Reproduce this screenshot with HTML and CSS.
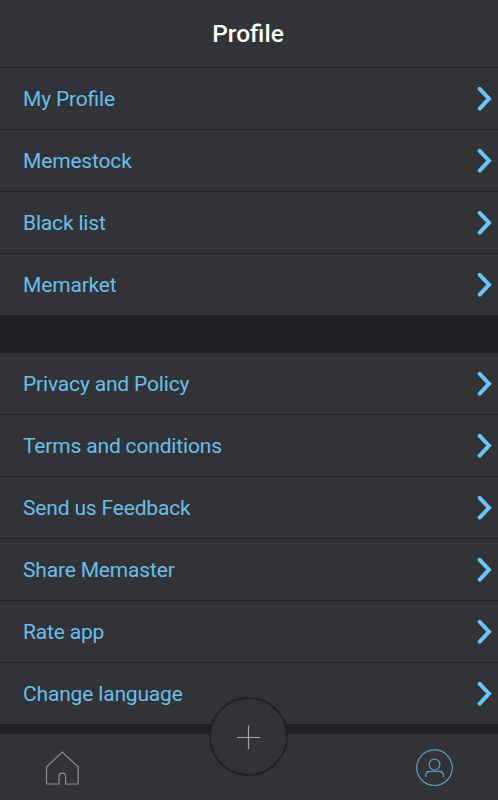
FILE: index.html
```html
<!DOCTYPE html>
<html lang="en">
<head>
<meta charset="utf-8" />
<title>Profile</title>
<link rel="stylesheet" href="styles.css">
</head>
<body>
<svg class="symbols">
  <symbol id="arrow" viewBox="0 0 16 26">
    <path d="M2.7 2.8 L12 12.7 L2.7 22.6" />
  </symbol>
</svg>
<div class="app">
  <header class="header"><h1>Profile</h1></header>
  <main class="content">
    <ul class="menu">
      <li><a>My Profile</a><svg class="arrow"><use href="#arrow" /></svg></li>
      <li><a>Memestock</a><svg class="arrow"><use href="#arrow" /></svg></li>
      <li><a>Black list</a><svg class="arrow"><use href="#arrow" /></svg></li>
      <li><a>Memarket</a><svg class="arrow"><use href="#arrow" /></svg></li>
    </ul>
    <ul class="menu">
      <li><a>Privacy and Policy</a><svg class="arrow"><use href="#arrow" /></svg></li>
      <li><a>Terms and conditions</a><svg class="arrow"><use href="#arrow" /></svg></li>
      <li><a>Send us Feedback</a><svg class="arrow"><use href="#arrow" /></svg></li>
      <li><a>Share Memaster</a><svg class="arrow"><use href="#arrow" /></svg></li>
      <li><a>Rate app</a><svg class="arrow"><use href="#arrow" /></svg></li>
      <li><a>Change language</a><svg class="arrow"><use href="#arrow" /></svg></li>
    </ul>
  </main>
  <nav class="tabbar">
    <svg class="tab home" viewBox="0 0 38 38">
      <path d="M3.5 18 L19.3 3 L35.2 18 V34 Q35.2 35 34.2 35 H22.6 V27.5 Q22.6 24.2 19.3 24.2 Q16 24.2 16 27.5 V35 H4.5 Q3.5 35 3.5 34 Z" />
    </svg>
    <svg class="tab user" viewBox="0 0 38 38">
      <circle cx="18.5" cy="18.7" r="17.8" />
      <circle cx="18.5" cy="15.6" r="5.4" />
      <path d="M9.8 28 V26.5 Q9.8 22.4 14 22.4 H23 Q27.3 22.4 27.3 26.5 V28" />
    </svg>
    <div class="add">
      <svg viewBox="0 0 24 24"><path d="M11.5 0.5 V24 M0 12.5 H23" /></svg>
    </div>
  </nav>
</div>
</body>
</html>
```
FILE: styles.css
```css
* {
  box-sizing: border-box;
}
body {
  margin: 0;
  background: #202124;
  font-family: Roboto, sans-serif;
}
.symbols {
  display: none;
}
.app {
  display: flex;
  flex-direction: column;
  height: 800px;
  overflow: hidden;
}
.header {
  display: flex;
  justify-content: center;
  height: 68px;
  padding: 18px 2px 0 0;
  background: #323336;
  border-bottom: 1px solid #1f2023;
}
.header h1 {
  margin: 0;
  font-size: 24.5px;
  line-height: 32px;
  font-weight: 500;
  color: #fff;
}
.content {
  display: flex;
  flex-direction: column;
  gap: 37px;
  flex: 1;
}
.menu {
  margin: 0;
  padding: 0;
  list-style: none;
}
.menu li {
  display: flex;
  align-items: center;
  justify-content: space-between;
  height: 62px;
  padding: 0 5px 0 23px;
  background: #323336;
  border-bottom: 1px solid #202124;
  font-size: 21px;
  letter-spacing: -0.17px;
  font-feature-settings: "liga";
  color: #68bfed;
}
.arrow {
  width: 16px;
  height: 26px;
  fill: none;
  stroke: #68c5f5;
  stroke-width: 4;
  stroke-linecap: round;
}
.tabbar {
  position: relative;
  display: flex;
  justify-content: space-between;
  height: 66px;
  padding: 15px 44px 0 43px;
  background: #323336;
}
.tab {
  width: 38px;
  height: 38px;
  fill: none;
  stroke-width: 1.2;
}
.home {
  stroke: #8d8e90;
}
.user {
  stroke: #5a9fc0;
}
.add {
  position: absolute;
  left: 209px;
  top: -37px;
  display: flex;
  align-items: center;
  justify-content: center;
  width: 79px;
  height: 79px;
  border: 2px solid #202124;
  border-radius: 50%;
  background: #323336;
}
.add svg {
  width: 24px;
  height: 24px;
  stroke: #a5a5a7;
  stroke-width: 1.2;
}
```
